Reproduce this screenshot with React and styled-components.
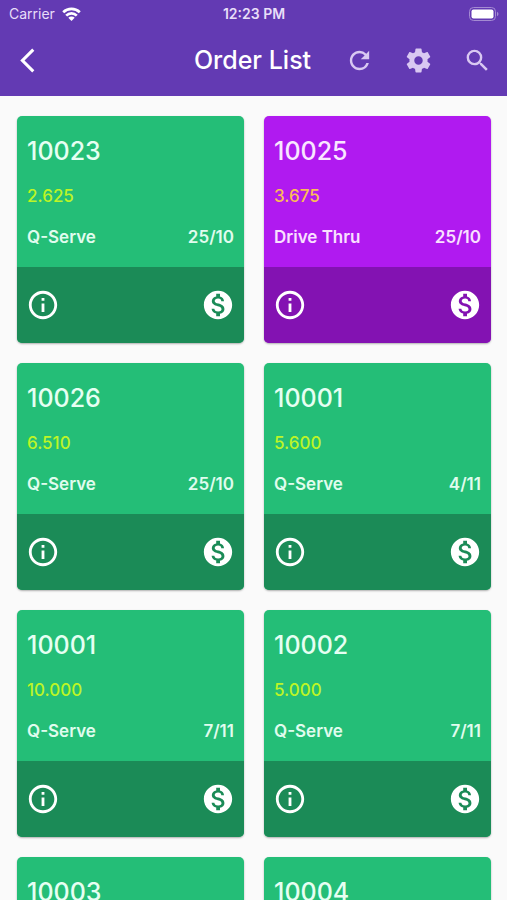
import React from 'react';
import styled, { createGlobalStyle } from 'styled-components';

const GlobalStyle = createGlobalStyle`
  *, *::before, *::after { box-sizing: border-box; }
  body { margin: 0; background: #fafafa; }
  button { font: inherit; color: inherit; }
`;

const Screen = styled.div`
  display: flex;
  flex-direction: column;
  height: 100vh;
  background: #fafafa;
  color: #fff;
  font-family: Inter, "Liberation Sans", sans-serif;
`;

const Header = styled.header`
  flex: none;
  background: #633ab3;
`;

const StatusBar = styled.div`
  display: grid;
  grid-template-columns: 1fr auto 1fr;
  align-items: center;
  height: 24px;
  padding: 4px 8px 0 9px;
  font-size: 14px;
  line-height: 20px;
  color: #e8def8;
`;

const Carrier = styled.span`
  display: flex;
  align-items: center;
  gap: 7px;
`;

const Clock = styled.time`
  font-weight: 600;
`;

const BatteryIcon = styled.svg`
  justify-self: end;
`;

const AppBar = styled.div`
  display: grid;
  grid-template-columns: 1fr auto 1fr;
  align-items: center;
  height: 72px;
  padding: 0 15px 0 13px;
`;

const Title = styled.h1`
  margin: 0;
  font-size: 25px;
  line-height: 32px;
  font-weight: 500;
`;

const Actions = styled.div`
  display: flex;
  justify-content: flex-end;
  gap: 30px;
  color: #d9c8f2;
`;

const IconButton = styled.button`
  display: flex;
  align-items: center;
  justify-content: center;
  width: ${(p) => p.$size}px;
  height: ${(p) => p.$size}px;
  padding: 0;
  border: 0;
  background: none;
  cursor: pointer;

  svg {
    width: 100%;
    height: 100%;
    fill: currentColor;
  }
`;

const Orders = styled.main`
  flex: 1;
  min-height: 0;
  overflow-y: auto;
  scrollbar-width: none;
`;

const Grid = styled.div`
  display: grid;
  grid-template-columns: repeat(2, minmax(0, 1fr));
  gap: 20px;
  padding: 20px 16px 20px 17px;
`;

const Card = styled.article`
  overflow: hidden;
  border-radius: 5px;
  background: ${(p) => (p.$drive ? '#b01af0' : '#24be77')};
  box-shadow: 0 1px 2px rgba(0, 0, 0, 0.3);
`;

const Details = styled.div`
  padding: 19px 10px 18px;
`;

const OrderNumber = styled.h2`
  margin: 0 0 17px;
  font-size: 25px;
  line-height: 32px;
  font-weight: 500;
  color: ${(p) => (p.$drive ? '#f9e6ff' : '#e6fff2')};
`;

const Amount = styled.p`
  margin: 0 0 17px;
  font-size: 17px;
  line-height: 24px;
  font-weight: 500;
  color: ${(p) => (p.$drive ? '#fbbd55' : '#bdf526')};
`;

const Meta = styled.div`
  display: flex;
  justify-content: space-between;
  font-size: 17px;
  line-height: 24px;
  font-weight: 600;
  color: ${(p) => (p.$drive ? '#f9e0ff' : '#e0fcee')};
`;

const CardActions = styled.footer`
  display: flex;
  align-items: center;
  justify-content: space-between;
  height: 76px;
  padding: 0 9px;
  background: ${(p) => (p.$drive ? '#8312b2' : '#1b8b57')};
`;

const orders = [
  { number: '10023', amount: '2.625', type: 'Q-Serve', date: '25/10' },
  { number: '10025', amount: '3.675', type: 'Drive Thru', date: '25/10' },
  { number: '10026', amount: '6.510', type: 'Q-Serve', date: '25/10' },
  { number: '10001', amount: '5.600', type: 'Q-Serve', date: '4/11' },
  { number: '10001', amount: '10.000', type: 'Q-Serve', date: '7/11' },
  { number: '10002', amount: '5.000', type: 'Q-Serve', date: '7/11' },
  { number: '10003', amount: '5.000', type: 'Q-Serve', date: '7/11' },
  { number: '10004', amount: '5.000', type: 'Q-Serve', date: '7/11' },
];

function Icon({ d }) {
  return (
    <svg viewBox="0 0 24 24" aria-hidden="true">
      <path d={d} />
    </svg>
  );
}

const paths = {
  back: 'M17.67 3.87 15.9 2.1 6 12l9.9 9.9 1.77-1.77L9.54 12z',
  refresh:
    'M17.65 6.35A7.958 7.958 0 0 0 12 4c-4.42 0-7.99 3.58-7.99 8s3.57 8 7.99 8c3.73 0 6.84-2.55 7.73-6h-2.08A5.99 5.99 0 0 1 12 18c-3.31 0-6-2.69-6-6s2.69-6 6-6c1.66 0 3.14.69 4.22 1.78L13 11h7V4l-2.35 2.35z',
  settings:
    'M19.43 12.98c.04-.32.07-.64.07-.98s-.03-.66-.07-.98l2.11-1.65c.19-.15.24-.42.12-.64l-2-3.46c-.12-.22-.39-.3-.61-.22l-2.49 1c-.52-.4-1.08-.73-1.69-.98l-.38-2.65A.488.488 0 0 0 14 2h-4c-.25 0-.46.18-.49.42l-.38 2.65c-.61.25-1.17.59-1.69.98l-2.49-1c-.23-.09-.49 0-.61.22l-2 3.46c-.13.22-.07.49.12.64l2.11 1.65c-.04.32-.07.65-.07.98s.03.66.07.98l-2.11 1.65c-.19.15-.24.42-.12.64l2 3.46c.12.22.39.3.61.22l2.49-1c.52.4 1.08.73 1.69.98l.38 2.65c.03.24.24.42.49.42h4c.25 0 .46-.18.49-.42l.38-2.65c.61-.25 1.17-.59 1.69-.98l2.49 1c.23.09.49 0 .61-.22l2-3.46c.12-.22.07-.49-.12-.64l-2.11-1.65zM12 15.5c-1.93 0-3.5-1.57-3.5-3.5s1.57-3.5 3.5-3.5 3.5 1.57 3.5 3.5-1.57 3.5-3.5 3.5z',
  search:
    'M15.5 14h-.79l-.28-.27A6.471 6.471 0 0 0 16 9.5 6.5 6.5 0 1 0 9.5 16c1.61 0 3.09-.59 4.23-1.57l.27.28v.79l5 4.99L20.49 19l-4.99-5zm-6 0C7.01 14 5 11.99 5 9.5S7.01 5 9.5 5 14 7.01 14 9.5 11.99 14 9.5 14z',
  info: 'M11 7h2v2h-2zm0 4h2v6h-2zm1-9C6.48 2 2 6.48 2 12s4.48 10 10 10 10-4.48 10-10S17.52 2 12 2zm0 18c-4.41 0-8-3.59-8-8s3.59-8 8-8 8 3.59 8 8-3.59 8-8 8z',
  money:
    'M12 2C6.48 2 2 6.48 2 12s4.48 10 10 10 10-4.48 10-10S17.52 2 12 2zm1.41 16.09V20h-2.67v-1.93c-1.71-.36-3.16-1.46-3.27-3.4h1.96c.1 1.05.82 1.87 2.65 1.87 1.96 0 2.4-.98 2.4-1.59 0-.83-.44-1.61-2.67-2.14-2.48-.6-4.18-1.62-4.18-3.67 0-1.72 1.39-2.84 3.11-3.21V4h2.67v1.95c1.86.45 2.79 1.86 2.85 3.39H14.3c-.05-1.11-.64-1.87-2.22-1.87-1.5 0-2.4.68-2.4 1.64 0 .84.65 1.39 2.67 1.91s4.18 1.39 4.18 3.91c-.01 1.83-1.38 2.83-3.12 3.16z',
};

function OrderCard({ order }) {
  const drive = order.type === 'Drive Thru';
  return (
    <Card $drive={drive}>
      <Details>
        <OrderNumber $drive={drive}>{order.number}</OrderNumber>
        <Amount $drive={drive}>{order.amount}</Amount>
        <Meta $drive={drive}>
          <span>{order.type}</span>
          <span>{order.date}</span>
        </Meta>
      </Details>
      <CardActions $drive={drive}>
        <IconButton $size={34} aria-label="Order information">
          <Icon d={paths.info} />
        </IconButton>
        <IconButton $size={34} aria-label="Pay order">
          <Icon d={paths.money} />
        </IconButton>
      </CardActions>
    </Card>
  );
}

export default function App() {
  return (
    <Screen>
      <GlobalStyle />
      <Header>
        <StatusBar>
          <Carrier>
            Carrier
            <svg width="19" height="14" viewBox="0 0 19 14" fill="none" stroke="#fff" strokeWidth="2.7" aria-hidden="true">
              <path d="M1.2 5.2a12 12 0 0 1 16.6 0M4.2 8.6a7.6 7.6 0 0 1 10.6 0" />
              <path d="M6.3 10.8a4.5 4.5 0 0 1 6.4 0L9.5 14z" fill="#fff" stroke="none" />
            </svg>
          </Carrier>
          <Clock>12:23 PM</Clock>
          <BatteryIcon width="30" height="14" viewBox="0 0 30 14" aria-hidden="true">
            <rect x="0.5" y="0.5" width="26" height="13" rx="4" fill="none" stroke="#a48bd2" />
            <rect x="2.5" y="2.5" width="22" height="9" rx="2" fill="#fff" />
            <path d="M28 4.8c2 .8 2 3.6 0 4.4z" fill="#a48bd2" />
          </BatteryIcon>
        </StatusBar>
        <AppBar>
          <IconButton $size={29} aria-label="Back">
            <Icon d={paths.back} />
          </IconButton>
          <Title>Order List</Title>
          <Actions>
            <IconButton $size={29} aria-label="Refresh">
              <Icon d={paths.refresh} />
            </IconButton>
            <IconButton $size={29} aria-label="Settings">
              <Icon d={paths.settings} />
            </IconButton>
            <IconButton $size={29} aria-label="Search">
              <Icon d={paths.search} />
            </IconButton>
          </Actions>
        </AppBar>
      </Header>
      <Orders>
        <Grid>
          {orders.map((order, index) => (
            <OrderCard key={index} order={order} />
          ))}
        </Grid>
      </Orders>
    </Screen>
  );
}
